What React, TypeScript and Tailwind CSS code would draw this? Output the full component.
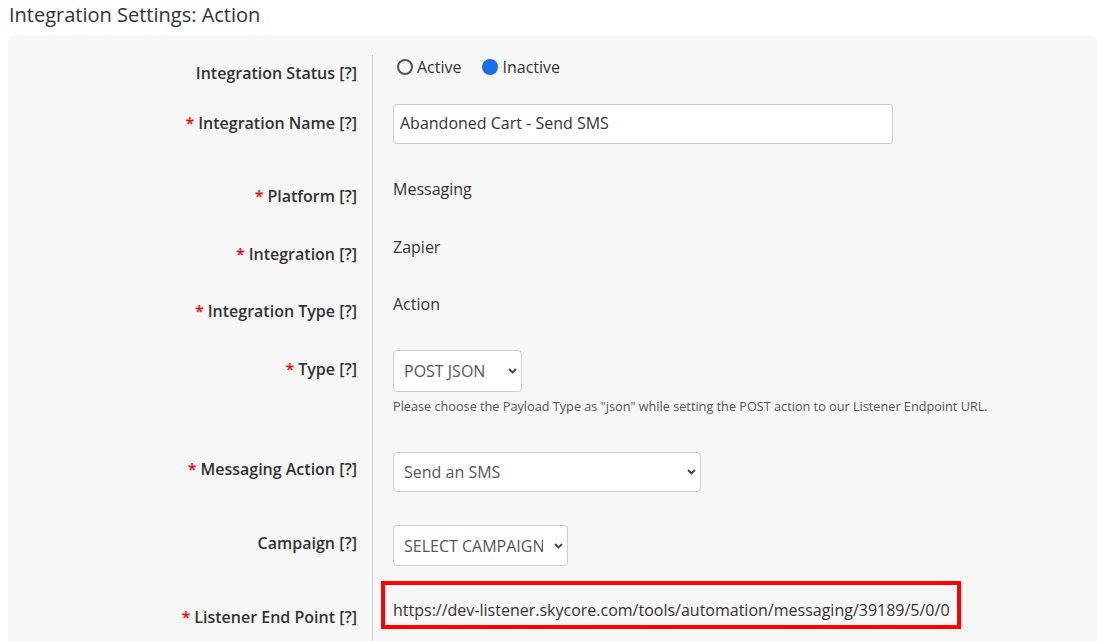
import React, { useState } from 'react';

const font = { fontFamily: '"Open Sans", "Liberation Sans", sans-serif' };

function Label({ text, required }: { text: string; required?: boolean }) {
  return (
    <span className="text-[16px] leading-5 font-semibold text-[#333]">
      {required && <span className="text-[#ff0000] mr-1">*</span>}
      {text} [?]
    </span>
  );
}

function Chevron() {
  return (
    <svg width="9" height="6" viewBox="0 0 9 6" className="absolute right-[5px] top-1/2 -translate-y-1/2 pointer-events-none">
      <path d="M1 1 L4.5 4.5 L8 1" fill="none" stroke="#444" strokeWidth="1.8" />
    </svg>
  );
}

function Select({ value, width, options }: { value: string; width: string; options: string[] }) {
  return (
    <div className={`relative ${width}`}>
      <select
        defaultValue={value}
        className="appearance-none w-full h-full bg-white border border-[#ccc] rounded-[4px] pl-[10px] pr-6 text-[16px] text-[#555] outline-none"
        style={font}
      >
        {options.map(o => (
          <option key={o}>{o}</option>
        ))}
      </select>
      <Chevron />
    </div>
  );
}

type Row = {
  label: string;
  required?: boolean;
  h: string;
  lpt: string;
  cpt: string;
  content: React.ReactNode;
  cpl?: string;
};

export default function App() {
  const [status, setStatus] = useState<'active' | 'inactive'>('inactive');

  const dot = (on: boolean) =>
    on ? (
      <span className="w-[16px] h-[16px] rounded-full bg-[#1a6ce8]" />
    ) : (
      <span className="w-[16px] h-[16px] rounded-full border-2 border-[#555]" />
    );

  const rows: Row[] = [
    {
      label: 'Integration Status',
      h: 'h-[44px]',
      lpt: 'pt-[6px]',
      cpt: 'pt-[2px]',
      content: (
        <div className="flex items-center text-[16px] leading-5 text-[#333]">
          <button onClick={() => setStatus('active')} className="flex items-center gap-[4px] ml-[4px]">
            {dot(status === 'active')}
            Active
          </button>
          <button onClick={() => setStatus('inactive')} className="flex items-center gap-[5px] ml-[20px]">
            {dot(status === 'inactive')}
            Inactive
          </button>
        </div>
      ),
    },
    {
      label: 'Integration Name',
      required: true,
      h: 'h-[61px]',
      lpt: 'pt-[12px]',
      cpt: 'pt-[5px]',
      content: (
        <input
          defaultValue="Abandoned Cart - Send SMS"
          className="w-[500px] h-[40px] bg-white border border-[#ccc] rounded-[3px] px-[6px] pb-[2px] text-[16px] text-[#333] outline-none"
          style={font}
        />
      ),
    },
    {
      label: 'Platform',
      required: true,
      h: 'h-[58px]',
      lpt: 'pt-[24px]',
      cpt: 'pt-[17px]',
      content: <span className="text-[16px] leading-5 text-[#333]">Messaging</span>,
    },
    {
      label: 'Integration',
      required: true,
      h: 'h-[58px]',
      lpt: 'pt-[24px]',
      cpt: 'pt-[17px]',
      content: <span className="text-[16px] leading-5 text-[#333]">Zapier</span>,
    },
    {
      label: 'Integration Type',
      required: true,
      h: 'h-[57px]',
      lpt: 'pt-[23px]',
      cpt: 'pt-[16px]',
      content: <span className="text-[16px] leading-5 text-[#333]">Action</span>,
    },
    {
      label: 'Type',
      required: true,
      h: 'h-[107px]',
      lpt: 'pt-[24px]',
      cpt: 'pt-[17px]',
      content: (
        <div>
          <Select value="POST JSON" width="w-[129px] h-[42px]" options={['POST JSON', 'POST FORM', 'GET']} />
          <p className="mt-[6px] text-[12.7px] leading-4 text-[#555]">
            Please choose the Payload Type as "json" while setting the POST action to our Listener Endpoint URL.
          </p>
        </div>
      ),
    },
    {
      label: 'Messaging Action',
      required: true,
      h: 'h-[70px]',
      lpt: 'pt-[17px]',
      cpt: 'pt-[12px]',
      content: <Select value="Send an SMS" width="w-[308px] h-[40px]" options={['Send an SMS', 'Send an MMS']} />,
    },
    {
      label: 'Campaign',
      h: 'h-[65px]',
      lpt: 'pt-[21px]',
      cpt: 'pt-[15px]',
      content: <Select value="SELECT CAMPAIGN" width="w-[175px] h-[41px]" options={['SELECT CAMPAIGN']} />,
    },
    {
      label: 'Listener End Point',
      required: true,
      h: 'h-[80px]',
      lpt: 'pt-[30px]',
      cpt: 'pt-[6px]',
      cpl: 'pl-[8px]',
      content: (
        <div className="w-[580px] h-[48px] border-[4px] border-[#ff0000] pl-[8px] pt-[15px] text-[16px] leading-5 text-[#333]">
          https://dev-listener.skycore.com/tools/automation/messaging/39189/5/0/0
        </div>
      ),
    },
  ];

  return (
    <div className="bg-white min-h-screen" style={font}>
      <h1 className="pl-[9px] pt-[2px] h-[35px] text-[20px] leading-[26px] text-[#333]">Integration Settings: Action</h1>
      <div className="ml-[8px] w-[1089px] bg-[#f7f7f7] rounded-t-[6px] pt-[20px]">
        {rows.map(r => (
          <div key={r.label} className={`flex ${r.h}`}>
            <div className={`w-[364px] shrink-0 text-right pr-[15px] ${r.lpt}`}>
              <Label text={r.label} required={r.required} />
            </div>
            <div className={`flex-1 border-l border-[#ccc] ${r.cpl ?? 'pl-[20px]'} ${r.cpt}`}>{r.content}</div>
          </div>
        ))}
      </div>
    </div>
  );
}
